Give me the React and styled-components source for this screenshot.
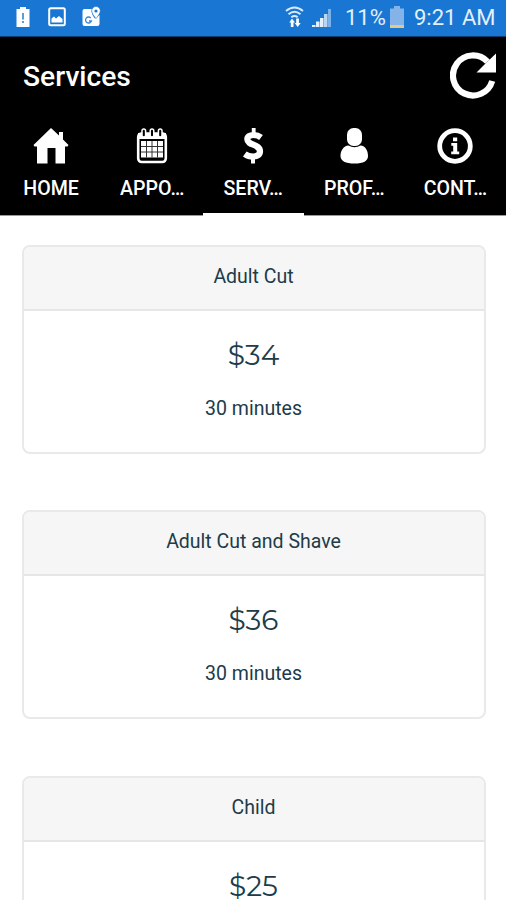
import React from "react";
import styled, { createGlobalStyle } from "styled-components";

const services = [
  { name: "Adult Cut", price: "$34", time: "30 minutes" },
  { name: "Adult Cut and Shave", price: "$36", time: "30 minutes" },
  { name: "Child", price: "$25" },
];

const tabs = [
  { label: "HOME", Icon: HomeIcon },
  { label: "APPO…", Icon: CalendarIcon },
  { label: "SERV…", Icon: DollarIcon, active: true },
  { label: "PROF…", Icon: PersonIcon },
  { label: "CONT…", Icon: InfoIcon },
];

function App() {
  return (
    <Screen>
      <GlobalStyle />
      <StatusBar />
      <Header>
        <TitleRow>
          <Title>Services</Title>
          <RefreshButton aria-label="Refresh">
            <RefreshIcon />
          </RefreshButton>
        </TitleRow>
        <Tabs>
          {tabs.map(({ label, Icon, active }) => (
            <Tab key={label} $active={active}>
              <Icon />
              <TabLabel>{label}</TabLabel>
            </Tab>
          ))}
        </Tabs>
      </Header>
      <ServiceList>
        {services.map((service) => (
          <Card key={service.name}>
            <CardHeader>{service.name}</CardHeader>
            <CardBody>
              <Price>{service.price}</Price>
              {service.time && <Duration>{service.time}</Duration>}
            </CardBody>
          </Card>
        ))}
      </ServiceList>
    </Screen>
  );
}

export default App;

function StatusBar() {
  return (
    <Status>
      <Notifications>
        <svg width="14" height="22" viewBox="0 0 14 22">
          <path d="M4 1h6v2h3.500v18H.5V3H4z" fill="#fff" />
          <path d="M6 7h2v6.500H6zM6 15h2v2H6z" fill="#5a9ade" />
        </svg>
        <svg width="18" height="20" viewBox="0 0 18 20">
          <rect x="1.200" y="1.200" width="15.600" height="17" rx="1.500" fill="none" stroke="#fff" strokeWidth="2" />
          <path d="M3.500 15.500v-4l2.500-2 2 2 3-2.500 3.500 3v3.500z" fill="#fff" />
        </svg>
        <svg width="19" height="21" viewBox="0 0 19 21">
          <path d="M2.500 3H10c-1 4 1 7 3 9.500L17.500 9v9q0 2-2 2h-13q-2 0-2-2V5q0-2 2-2z" fill="#fff" />
          <path d="M8.800 12a3 3 0 1 0 .6 3H7" fill="none" stroke="#3f88d8" strokeWidth="1.300" />
          <path d="M14 .5a4.300 4.300 0 0 1 4.300 4.300c0 3-4.300 7.700-4.300 7.700S9.700 7.800 9.700 4.800A4.300 4.300 0 0 1 14 .5z" fill="#fff" stroke="#1976d2" strokeWidth=".6" />
          <circle cx="14" cy="5" r="1.600" fill="#1976d2" />
        </svg>
      </Notifications>
      <System>
        <svg width="19" height="22" viewBox="0 0 19 22">
          <g fill="none" stroke="#d8e9fa" strokeWidth="1.900">
            <path d="M1 5Q9.500-2 18 5" />
            <path d="M3.500 8.300q6-5.300 12 0" />
            <path d="M6.300 11.200q3.200-2.500 6.400 0" />
          </g>
          <path d="M7 12.500l3 4H8.500V21H5.800v-4.500H4.300zM12.700 21l-3-4h1.500v-4.500h2.700V17h1.800z" fill="#fff" />
        </svg>
        <Signal width="19" height="19" viewBox="0 0 19 19">
          <path d="M0 17h3.500v2H0zM4 13.500h3.500V19H4zM8 10h3.500v9H8z" fill="#e4f0fc" />
          <path d="M12 6h3.500v13H12z" fill="#b9d6f5" />
          <path d="M16 1h3v18h-3z" fill="#7cb2ea" />
        </Signal>
        <Percent>11%</Percent>
        <svg width="14" height="22" viewBox="0 0 14 22">
          <path d="M4 0h6v2.500h4V22H0V2.500h4z" fill="#83b3e8" />
          <path d="M0 19h14v3H0z" fill="#e3c889" />
        </svg>
        <Clock>9:21 AM</Clock>
      </System>
    </Status>
  );
}

function RefreshIcon() {
  return (
    <svg width="47" height="47" viewBox="0 0 47 47">
      <path d="M37.500 9.700A20 20 0 1 0 42.200 29" fill="none" stroke="#fff" strokeWidth="6.200" />
      <path d="M46 1.500v19H26.500L35 12z" fill="#fff" />
    </svg>
  );
}

function HomeIcon() {
  return (
    <svg width="36" height="36" viewBox="0 0 36 36">
      <path d="M18 0l8 7.500V4h4v7.500l5.500 5.500-1 1.500H32v17h-9.500V20h-8v15.500H4v-17H1.500L.5 17z" fill="#fff" />
    </svg>
  );
}

function CalendarIcon() {
  return (
    <svg width="36" height="36" viewBox="0 0 36 36">
      <rect x="4.200" y="5.500" width="27.600" height="28.500" rx="3.500" fill="none" stroke="#fff" strokeWidth="2.600" />
      <path d="M4 5h28v6H4z" fill="#fff" />
      <g fill="#000" stroke="#fff" strokeWidth="1.500">
        <rect x="8" y="1" width="3.600" height="8" rx="1.800" />
        <rect x="16.200" y="1" width="3.600" height="8" rx="1.800" />
        <rect x="24.400" y="1" width="3.600" height="8" rx="1.800" />
      </g>
      <path d="M7 13h22v16.500H7z" fill="#fff" />
      <path d="M12.500 13v16.500M18 13v16.500M23.500 13v16.500M7 18.500h22M7 24h22" stroke="#333" strokeWidth="1" />
    </svg>
  );
}

function DollarIcon() {
  return (
    <svg width="36" height="36" viewBox="0 0 36 36">
      <path
        d="M26 9.500C24 8 21 7 18.500 7c-3.800 0-6.200 1.600-6.200 4.300 0 6.200 12.700 4.700 12.700 11.900 0 3.600-2.900 5.300-6.900 5.300-3 0-6.100-1-8.300-2.600"
        fill="none"
        stroke="#fff"
        strokeWidth="6.200"
      />
      <path d="M16.800 0h3.800v7h-3.800zM16 28h4v7.500h-4z" fill="#fff" />
    </svg>
  );
}

function PersonIcon() {
  return (
    <svg width="36" height="36" viewBox="0 0 36 36">
      <rect x="11" y="0" width="15" height="18" rx="6.500" fill="#fff" />
      <path d="M12.500 17.500q6 3.500 12 0C29.500 18 32 22.500 32 28c0 5-4.500 7.500-13.500 7.500S4.500 33 4.500 28c0-5.500 3-10 8-10.500z" fill="#fff" />
    </svg>
  );
}

function InfoIcon() {
  return (
    <svg width="36" height="36" viewBox="0 0 36 36">
      <circle cx="18" cy="18" r="15.300" fill="none" stroke="#fff" strokeWidth="4.800" />
      <path d="M16 9.500h4.200v3.700H16zM14.300 15h5.900v8.500h2v2.700h-8v-2.700h2v-5.800h-1.900z" fill="#fff" />
    </svg>
  );
}

const GlobalStyle = createGlobalStyle`
  * {
    box-sizing: border-box;
  }
  body {
    margin: 0;
    background: #fff;
    font-family: Roboto, "Liberation Sans", sans-serif;
  }
  svg {
    display: block;
    flex-shrink: 0;
  }
`;

const Screen = styled.div`
  height: 900px;
  overflow: hidden;
  background: #fff;
`;

const Status = styled.div`
  display: flex;
  justify-content: space-between;
  height: 37px;
  padding: 0 11px 3px 16px;
  background: #1976d2;
  border-bottom: 1px solid #0b3c6c;
`;
const Notifications = styled.div`
  display: flex;
  align-items: center;
  gap: 16px;

  svg:first-child {
    margin-right: 2px;
  }
`;
const System = styled.div`
  display: flex;
  align-items: center;
  color: #e3effb;
  font-size: 22px;
  line-height: 35px;
  white-space: nowrap;
`;
const Signal = styled.svg`
  margin: 2px 14px 0 8px;
`;
const Percent = styled.span`
  width: 45px;
  padding-top: 1px;
`;
const Clock = styled.span`
  width: 81px;
  margin-left: 10px;
  padding-top: 1px;
`;

const Header = styled.header`
  height: 179px;
  background: #000;
  color: #fff;
  border-bottom: 1px solid #999;
`;
const TitleRow = styled.div`
  display: flex;
  align-items: center;
  justify-content: space-between;
  height: 78px;
  padding: 0 9px 0 23px;
`;
const Title = styled.h1`
  margin: 0;
  font-size: 28.2px;
  font-weight: 500;
`;
const RefreshButton = styled.button`
  margin-top: -2px;
  padding: 0;
  border: 0;
  background: none;
`;
const Tabs = styled.nav`
  display: grid;
  grid-template-columns: repeat(5, 1fr);
  height: 101px;
  padding-left: 0.5px;
`;
const Tab = styled.div`
  display: flex;
  flex-direction: column;
  align-items: center;
  padding-top: 13px;
  border-bottom: 3px solid ${({ $active }) => ($active ? "#fff" : "transparent")};
`;
const TabLabel = styled.span`
  margin-top: 13px;
  font-size: 19.6px;
  font-weight: 500;
  line-height: 24px;
`;

const ServiceList = styled.main`
  display: flex;
  flex-direction: column;
  gap: 56.5px;
  padding: 28.5px 20.5px 0 21.5px;
`;
const Card = styled.section`
  flex-shrink: 0;
  height: 209px;
  border: 2px solid #e9e9e9;
  border-radius: 8px;
  overflow: hidden;
  color: #203b49;
  text-align: center;
`;
const CardHeader = styled.div`
  height: 64px;
  border-bottom: 2px solid #e6e6e6;
  background: #f6f6f6;
  font-size: 19.5px;
  line-height: 60px;
`;
const CardBody = styled.div`
  padding-top: 26px;
`;
const Price = styled.div`
  font-family: Montserrat, Inter, sans-serif;
  font-size: 28px;
  font-weight: 400;
  line-height: 36px;
`;
const Duration = styled.div`
  margin-top: 23px;
  font-size: 19.5px;
  line-height: 26px;
`;
